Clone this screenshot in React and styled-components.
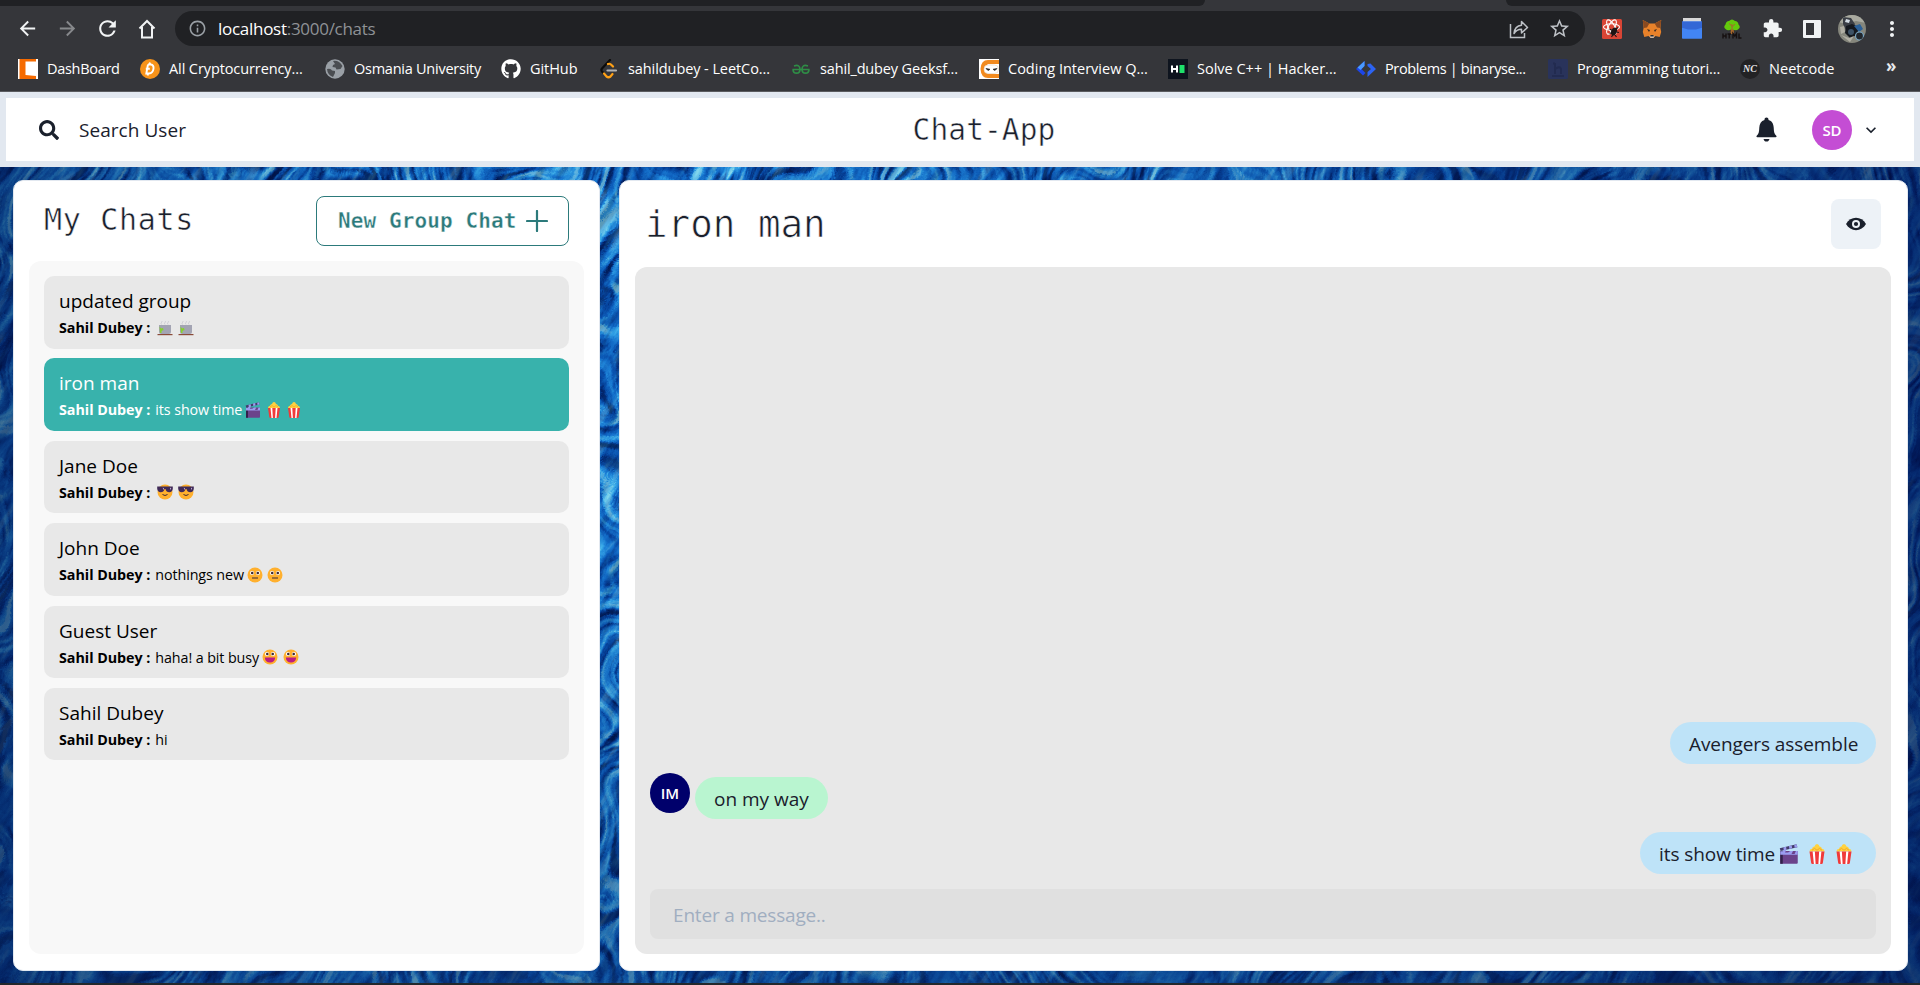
import React from "react";
import styled, { createGlobalStyle } from "styled-components";
import { FaSearch, FaGithub } from "react-icons/fa";
import {
  MdArrowBack, MdArrowForward, MdRefresh, MdInfoOutline,
  MdStarBorder, MdMoreVert, MdExpandMore, MdExtension,
} from "react-icons/md";

const GlobalStyle = createGlobalStyle`
  *, *::before, *::after { box-sizing: border-box; }
  body {
    margin: 0;
    background: #202124;
    font-family: "Open Sans", "Noto Sans", sans-serif;
    color: #1a202c;
    overflow: hidden;
  }
  svg { display: block; flex: none; }
`;

const Page = styled.div`
  width: 1920px;
  height: 985px;
  display: flex;
  flex-direction: column;
  overflow: hidden;
`;

/* ---------- browser ---------- */

const TabStrip = styled.div`
  height: 6px;
  display: flex;
  justify-content: space-between;
  background: #35363a;
`;

const TabEdge = styled.div`
  width: ${(p) => p.$width}px;
  background: #202124;
  border-radius: ${(p) => (p.$side === "left" ? "0 0 9px 0" : "0 0 0 9px")};
`;

const Toolbar = styled.div`
  height: 45px;
  padding: 0 8px 0 7px;
  display: flex;
  align-items: flex-start;
  background: #35363a;
`;

const ToolGroup = styled.div`
  display: flex;
  flex: none;
  padding-top: 5px;
`;

const ToolCell = styled.div`
  width: 40px;
  height: 35px;
  flex: none;
  display: flex;
  align-items: center;
  justify-content: center;
  color: ${(p) => p.$color || "#f1f3f4"};
`;

const AddressBar = styled.div`
  width: 1410px;
  height: 35px;
  flex: none;
  margin: 5px 7px 0 8px;
  padding: 0 14px 0 13px;
  display: flex;
  align-items: center;
  border-radius: 18px;
  background: #202124;
  color: #9aa0a6;
`;

const Url = styled.div`
  flex: 1;
  margin-left: 11px;
  font-size: 17px;
  letter-spacing: -0.28px;
  line-height: 34px;
  color: #8f9296;
  span { color: #fff; }
`;

const AddressAction = styled.div`
  margin-left: 19px;
  color: #bdc1c6;
`;

const Bookmarks = styled.div`
  height: 41px;
  padding: 0 0 5px 18px;
  display: flex;
  align-items: center;
  background: #35363a;
  border-bottom: 1px solid #5b5c60;
`;

const Bookmark = styled.div`
  width: ${(p) => p.$width}px;
  display: flex;
  align-items: center;
  gap: 9px;
  flex: none;
`;

const BookmarkLabel = styled.span`
  font-size: 14.5px;
  line-height: 20px;
  letter-spacing: ${(p) => p.$spacing}px;
  color: #fff;
  white-space: nowrap;
`;

/* ---------- app bar ---------- */

const NavBar = styled.header`
  height: 75px;
  border: 6px solid #e2e8f0;
  background: #fff;
  display: grid;
  grid-template-columns: 1fr auto 1fr;
  align-items: center;
  padding: 0 33px 0 33px;
`;

const SearchButton = styled.div`
  display: flex;
  align-items: center;
  gap: 20px;
  font-size: 19px;
  font-weight: 500;
  letter-spacing: 0.05px;
`;

const Brand = styled.h1`
  margin: 0 0 0 48px;
  font: 400 29.5px/40px "DejaVu Sans Mono", monospace;
  letter-spacing: 0.1px;
  -webkit-text-stroke: 0.5px #fff;
`;

const NavRight = styled.div`
  display: flex;
  justify-content: flex-end;
  align-items: center;
`;

const Avatar = styled.div`
  width: 40px;
  height: 40px;
  flex: none;
  display: flex;
  align-items: center;
  justify-content: center;
  border-radius: 50%;
  background: ${(p) => p.$color};
  color: #fff;
  font-size: 15px;
  font-weight: 600;
`;

const NavAvatar = styled(Avatar)`
  margin: 0 9px 0 35px;
`;

/* ---------- content ---------- */

const Content = styled.main`
  height: 816px;
  display: grid;
  grid-template: 816px / 1920px;
  & > * { grid-area: 1 / 1; }
`;

const Columns = styled.div`
  z-index: 1;
  display: flex;
  gap: 19px;
  padding: 13px 12px 12px 13px;
`;

const Panel = styled.section`
  width: ${(p) => p.$width}px;
  flex: none;
  display: flex;
  flex-direction: column;
  background: #fff;
  border: 1px solid #e2e8f0;
  border-radius: 10px;
`;

const ChatsHeader = styled.div`
  height: 80px;
  padding: 15px 30px 15px 30px;
  display: flex;
  justify-content: space-between;
`;

const PanelTitle = styled.h2`
  margin: 0;
  font-family: "DejaVu Sans Mono", monospace;
  font-weight: 400;
  font-size: ${(p) => p.$size}px;
  line-height: ${(p) => p.$line}px;
  letter-spacing: ${(p) => p.$spacing || 0}px;
  -webkit-text-stroke: ${(p) => p.$thin}px #fff;
`;

const GroupButton = styled.button`
  width: 253px;
  height: 50px;
  padding: 0 20px 0 21px;
  display: flex;
  align-items: center;
  justify-content: space-between;
  border: 1px solid #2c7a7b;
  border-radius: 8px;
  background: #fff;
  color: #2c7a7b;
  font: 700 21px/48px "DejaVu Sans Mono", monospace;
  letter-spacing: 0.1px;
  -webkit-text-stroke: 0.35px #fff;
`;

const ChatList = styled.div`
  margin: 0 15px 0 15px;
  height: 693px;
  padding: 15px;
  display: flex;
  flex-direction: column;
  gap: 9.9px;
  background: #f8f8f8;
  border-radius: 12px;
`;

const ChatRow = styled.div`
  height: 72.5px;
  flex: none;
  padding: 10px 15px;
  border-radius: 10px;
  background: ${(p) => (p.$active ? "#38b2ac" : "#e8e8e8")};
  color: ${(p) => (p.$active ? "#fff" : "#000")};
`;

const ChatName = styled.div`
  font-size: 19px;
  line-height: 31px;
`;

const Preview = styled.div`
  height: 21px;
  display: flex;
  align-items: center;
  font-size: 14.3px;
  line-height: 21px;
  letter-spacing: -0.1px;
  white-space: pre;
  b { font-weight: 700; letter-spacing: -0.03px; margin-right: 5px; }
`;

const EmojiRun = styled.span`
  display: flex;
  gap: ${(p) => p.$gap}px;
  margin-left: ${(p) => p.$left}px;
`;

const ConversationHeader = styled.div`
  height: 86px;
  padding: 18px 26px 0 25px;
  display: flex;
  justify-content: space-between;
`;

const ViewButton = styled.div`
  width: 50px;
  height: 50px;
  display: flex;
  align-items: center;
  justify-content: center;
  border-radius: 8px;
  background: #edf2f7;
`;

const Conversation = styled.div`
  margin: 0 16px 0 15px;
  height: 687px;
  padding: 15px;
  display: flex;
  flex-direction: column;
  justify-content: flex-end;
  background: #e8e8e8;
  border-radius: 12px;
`;

const MessageRow = styled.div`
  display: flex;
  gap: 5px;
  align-items: flex-start;
  justify-content: ${(p) => (p.$mine ? "flex-end" : "flex-start")};
  margin-bottom: ${(p) => p.$after}px;
`;

const Bubble = styled.div`
  height: 42px;
  width: ${(p) => p.$width}px;
  margin-top: ${(p) => p.$top || 0}px;
  padding: 2px 0 0 19px;
  display: flex;
  align-items: center;
  border-radius: 25px;
  background: ${(p) => (p.$mine ? "#bee3f8" : "#b9f5d0")};
  font-size: 19px;
  letter-spacing: ${(p) => (p.$mine ? -0.08 : 0)}px;
  white-space: nowrap;
`;

const MessageInput = styled.div`
  height: 50px;
  padding: 1px 0 0 23px;
  display: flex;
  align-items: center;
  border-radius: 8px;
  background: #e0e0e0;
  color: #a0aec0;
  font-size: 19px;
  letter-spacing: -0.18px;
`;

const Taskbar = styled.div`
  height: 2px;
  background: #23282c;
`;

/* ---------- drawings ---------- */

const Ramp = () => (
  <feComponentTransfer>
    <feFuncR type="table" tableValues="0 0.01 0.02 0.06 0.12 0.24 0.55" />
    <feFuncG type="table" tableValues="0.06 0.13 0.25 0.39 0.52 0.7 0.88" />
    <feFuncB type="table" tableValues="0.24 0.4 0.6 0.76 0.86 0.94 0.95" />
  </feComponentTransfer>
);

const Backdrop = () => (
  <svg width="1920" height="816" viewBox="0 0 1920 816">
    <defs>
      <filter id="strokesA" x="0" y="0" width="100%" height="100%" colorInterpolationFilters="sRGB">
        <feTurbulence type="fractalNoise" baseFrequency="0.1 0.016" numOctaves="5" seed="8" result="n" />
        <feTurbulence type="fractalNoise" baseFrequency="0.009" numOctaves="2" seed="3" result="w" />
        <feDisplacementMap in="n" in2="w" scale="190" xChannelSelector="R" yChannelSelector="G" />
        <feColorMatrix values="2 1 0 0 -0.98  2 1 0 0 -0.98  2 1 0 0 -0.98  0 0 0 0 1" />
        <Ramp />
      </filter>
      <filter id="strokesB" x="0" y="0" width="100%" height="100%" colorInterpolationFilters="sRGB">
        <feTurbulence type="fractalNoise" baseFrequency="0.02 0.11" numOctaves="5" seed="21" />
        <feColorMatrix values="2 1 0 0 -0.98  2 1 0 0 -0.98  2 1 0 0 -0.98  0 0 0 0 1" />
        <Ramp />
      </filter>
      <linearGradient id="shade" x1="0" x2="1" y1="0" y2="0">
        <stop offset="0" stopColor="#021447" stopOpacity="0.55" />
        <stop offset="0.12" stopColor="#03225f" stopOpacity="0.2" />
        <stop offset="0.35" stopColor="#0a4ea0" stopOpacity="0.05" />
        <stop offset="0.7" stopColor="#052a70" stopOpacity="0.3" />
        <stop offset="1" stopColor="#010f48" stopOpacity="0.65" />
      </linearGradient>
      <linearGradient id="floor" x1="0" x2="0" y1="0" y2="1">
        <stop offset="0.5" stopColor="#03205c" stopOpacity="0" />
        <stop offset="1" stopColor="#03205c" stopOpacity="0.4" />
      </linearGradient>
    </defs>
    <g transform="rotate(14 960 408)">
      <rect x="-200" y="-300" width="2320" height="1420" filter="url(#strokesA)" />
    </g>
    <g transform="rotate(-58 960 408)" opacity="0.3">
      <rect x="0" y="-700" width="1920" height="2220" filter="url(#strokesB)" />
    </g>
    <rect width="1920" height="816" fill="url(#shade)" />
    <rect width="1920" height="816" fill="url(#floor)" />
  </svg>
);

const Home = () => (
  <svg width="18" height="20" viewBox="0 0 18 20" fill="none" stroke="#f1f3f4" strokeWidth="2">
    <path d="M1.500 9.500L9 2l7.500 7.500M4 8v10.500h10V8" />
  </svg>
);

const Bell = () => (
  <svg width="21" height="25" viewBox="0 0 21 25" fill="#1a202c">
    <path d="M10.500 .5c1.200 0 2 .9 2 2v.4c3.500 1 5 3.900 5.200 7.500.2 4 .4 6.300 2.600 8.300.5.500.3 1.500-.6 1.500H1.300c-.9 0-1.100-1-.6-1.500 2.200-2 2.400-4.300 2.600-8.300.2-3.600 1.700-6.500 5.200-7.500v-.4c0-1.100.8-2 2-2z" />
    <path d="M7.500 22h6c-.4 1.600-1.500 2.600-3 2.600s-2.600-1-3-2.600z" />
  </svg>
);

const Eye = () => (
  <svg width="20" height="14" viewBox="0 0 20 14">
    <path d="M0 7C2.400 3 6 .8 10 .8S17.600 3 20 7c-2.400 4-6 6.200-10 6.200S2.400 11 0 7z" fill="#1a202c" />
    <circle cx="10" cy="7" r="4" fill="#edf2f7" />
    <circle cx="10" cy="7" r="2.100" fill="#1a202c" />
  </svg>
);

const Plus = () => (
  <svg width="22" height="22" viewBox="0 0 22 22" stroke="#2c7a7b" strokeWidth="2.200" strokeLinecap="round">
    <path d="M11 1v20M1 11h20" />
  </svg>
);

const Cup = ({ size = 16 }) => (
  <svg width={size} height={size} viewBox="0 0 16 16">
    <path d="M4.500 4.500q-1-1 0-2t0-1.500M8 4.500q-1-1 0-2t0-1.500M11 4.500q-1-1 0-2t0-1.500" stroke="#c4c4cc" fill="none" strokeWidth=".8" />
    <path d="M2 5h12v7q0 2-2 2H4q-2 0-2-2z" fill="#a3a4b3" />
    <path d="M2.500 6.500l1.500 2 2-.5.500 2-2 1v2H3z" fill="#86d12f" />
    <path d="M.5 14.600h15" stroke="#8a4b38" strokeWidth="1.200" />
  </svg>
);

const Clapper = ({ size = 16 }) => (
  <svg width={size} height={size} viewBox="0 0 16 16">
    <path d="M1 5.500h14V15q0 .8-.8.8H1z" fill="#6b438b" />
    <path d="M1 5.500h2V15.800H1z" fill="#32204a" />
    <path d="M.6 3.400L14 .2l.7 2.300L1.300 5.600z" fill="#433b6b" />
    <path d="M3.500 2.700l2.200-.5.300 2.300-2.200.5zM8 1.600l2.200-.5.300 2.300-2.200.5zM12.200.7l1.800-.5.700 2.300-2.200.5zM1 5.800h2l1-1.600 2 .1-1.200 2.400 2.500.1L9 5.500l2.200.1L10 8h2.500l1-2.500H15v3H1z" fill="#9b9cf0" />
  </svg>
);

const Popcorn = ({ size = 16 }) => (
  <svg width={size} height={size} viewBox="0 0 16 16">
    <path d="M2 6q0-2 2-2.200Q4.500 2 6 2q.5-2 2-2t2 2q1.500 0 2 1.800Q14 4 14 6z" fill="#ffd23f" />
    <path d="M2 6h12l-1.300 9q-.1 1-1.100 1H4.400q-1 0-1.100-1z" fill="#f03a3a" />
    <path d="M4.500 6h1.800l.6 10H5.500zM9.700 6h1.800l-1 10H9.100z" fill="#fff" />
    <path d="M4 5l2-1.500L8 5l2-1.500L12 5" stroke="#f2a82a" strokeWidth=".8" fill="none" />
  </svg>
);

const Face = ({ kind }) => (
  <svg width="16" height="16" viewBox="0 0 16 16">
    <circle cx="8" cy="8" r="7.500" fill="#ffb02e" />
    {kind === "cool" && (
      <>
        <path d="M.2 2.500h15.600v2.300Q15.500 8.200 12.300 8.200 9.300 8.200 8.500 5h-1Q6.700 8.200 3.700 8.200.5 8.200.2 4.800z" fill="#402a57" />
        <path d="M5.800 3.500l1.200 1-.8 1.500zM13 3.500l1.200 1-.8 1.500z" fill="#d9c8ef" />
        <path d="M5.500 10.500q2.500 2 5 0" stroke="#402a32" fill="none" />
      </>
    )}
    {kind === "neutral" && (
      <>
        <circle cx="5" cy="6" r="2" fill="#fff" />
        <circle cx="11" cy="6" r="2" fill="#fff" />
        <circle cx="5.200" cy="6" r="1.300" fill="#402a32" />
        <circle cx="10.800" cy="6" r="1.300" fill="#402a32" />
        <path d="M5 11h6" stroke="#402a32" />
      </>
    )}
    {kind === "grin" && (
      <>
        <circle cx="5" cy="5" r="2.100" fill="#fff" />
        <circle cx="11" cy="5" r="2.100" fill="#fff" />
        <circle cx="5.300" cy="5" r="1.300" fill="#402a32" />
        <circle cx="10.700" cy="5" r="1.300" fill="#402a32" />
        <path d="M2.800 8.500h10.400q-.5 5-5.200 5t-5.200-5z" fill="#bb1d80" />
      </>
    )}
  </svg>
);

const emojis = {
  cup: <Cup />, clapper: <Clapper />, popcorn: <Popcorn />,
  cool: <Face kind="cool" />, neutral: <Face kind="neutral" />, grin: <Face kind="grin" />,
};

const Share = () => (
  <svg width="20" height="20" viewBox="0 0 20 20" fill="none" stroke="#bdc1c6" strokeWidth="1.500">
    <path d="M1.500 5v13.500h14V14" />
    <path d="M5 14.500C5.500 9 8.500 6.500 12.500 6.200V2.500l6 6-6 5.500v-3.700C9 10.300 6.800 11.500 5 14.500z" strokeLinejoin="round" />
  </svg>
);

const Bug = () => (
  <svg width="20" height="20" viewBox="0 0 20 20">
    <rect width="20" height="20" rx="1.500" fill="#d94535" />
    <g fill="none" stroke="#fff" strokeWidth="1.100">
      <ellipse cx="9.500" cy="8" rx="8" ry="3.200" />
      <ellipse cx="9.500" cy="8" rx="8" ry="3.200" transform="rotate(60 9.500 8)" />
      <ellipse cx="9.500" cy="8" rx="8" ry="3.200" transform="rotate(120 9.500 8)" />
    </g>
    <ellipse cx="12" cy="12.500" rx="2.800" ry="4" transform="rotate(25 12 12.500)" fill="#1e1414" />
    <path d="M7.500 10l3 1.500M7.500 14.500l3-1M9.500 18l1.500-2.500M14 10l2-1.500M14.500 13l2.500.5M13 16l1.500 2" stroke="#1e1414" strokeWidth="1.200" />
  </svg>
);

const Fox = () => (
  <svg width="20" height="20" viewBox="0 0 20 20">
    <path d="M.8 1l6.500 3.600h5.400L19.200 1l-.8 8 .8 4-1.500 5-4.200-1-2 1.800h-3L6.500 17l-4.200 1-1.500-5 .8-4z" fill="#e8822a" />
    <path d="M.8 1l6.500 3.600L5 8.500 1.600 9zM19.200 1l-6.500 3.600L15 8.500l3.400.5z" fill="#8a4a20" />
    <path d="M5 10l3 1-1 2zM15 10l-3 1 1 2z" fill="#3b2a22" />
    <path d="M7.500 16.500h5l-.8 2.300H8.300z" fill="#d9cfc6" />
    <path d="M8.500 16h3l.3 1.500H8.200z" fill="#2a2a2a" />
  </svg>
);

const Window = () => (
  <svg width="20" height="21" viewBox="0 0 20 21">
    <rect x="1" width="18" height="5" fill="#d8d8d8" />
    <path d="M0 3.500h20V20q0 .8-.8.8H.8Q0 20.800 0 20z" fill="#4285f4" />
    <path d="M0 3.500h20v6.300l-6 1.700H6L0 9.800z" fill="#3367d6" />
  </svg>
);

const Tree = () => (
  <svg width="20" height="20" viewBox="0 0 20 20">
    <path d="M9 8h2.500l.5 7H8.500z" fill="#a8682a" />
    <path d="M3.500 10Q1 8 3.500 5.500 4 2 7 2 10-1 13 2 16 2 16.500 5.500 19 8 16.500 10 14 12.500 10 10 6 12.500 3.500 10z" fill="#63c90c" />
    <path d="M10 13V5M10 8l3-3M10 7L7 4.500" stroke="#a8682a" />
    <path d="M1 14.500v5M4 14.500v5M1 17h3M5.500 15h3.500M7.200 14.500v5M11 19.500v-5l1.800 2.500 1.700-2.500v5M17 14.500V19h2.500" fill="none" stroke="#161010" strokeWidth="1.400" />
  </svg>
);

const SidePanel = () => (
  <svg width="18" height="18" viewBox="0 0 18 18">
    <rect width="18" height="18" rx="1" fill="#f1f3f4" />
    <rect x="3" y="3" width="8" height="12" fill="#35363a" />
  </svg>
);

const Photo = () => (
  <svg width="28" height="28" viewBox="0 0 28 28">
    <clipPath id="disc"><circle cx="14" cy="14" r="14" /></clipPath>
    <g clipPath="url(#disc)">
      <rect width="28" height="28" fill="#85867c" />
      <path d="M0 0h28v8L18 6 8 9 0 7z" fill="#a9aaa0" />
      <path d="M5 2l8 1 4 6-2 5-7 1-3-6z" fill="#3a3e45" />
      <path d="M8 11l6-2 7 3-2 8-7 3-5-5z" fill="#15191f" />
      <path d="M16 11l6-2 3 5-4 3z" fill="#2b6098" />
      <circle cx="13" cy="17" r="3" fill="#3d5266" />
      <circle cx="21.500" cy="21" r="4" fill="#22272d" stroke="#78a6c4" strokeWidth="1.200" />
      <path d="M8 4l4 1-1 3-4-1z" fill="#d3dce4" />
      <path d="M2 12l4-1 1 6-4 2zM3 20l8 3 5-2-4 6z" fill="#b1afa4" />
    </g>
  </svg>
);

const CodingTile = () => (
  <svg width="20" height="20" viewBox="0 0 20 20">
    <rect width="20" height="20" fill="#fff" />
    <path d="M1.500 0H18v2.500H7.500v13.500L18 17v3H1.500z" fill="#f56a00" />
  </svg>
);
const Coin = () => (
  <svg width="20" height="20" viewBox="0 0 20 20">
    <circle cx="10" cy="10" r="10" fill="#f7931a" />
    <path d="M8 5.500h2.800q3.200.5 2.700 4.200-.6 4.600-4.500 4.800H6.300L8 5.500M5.800 9.800h4M10 3.500l-.4 2M8 14.500l-.4 2" fill="none" stroke="#fff" strokeWidth="1.900" />
  </svg>
);
const Globe = () => (
  <svg width="20" height="20" viewBox="0 0 20 20">
    <circle cx="10" cy="10" r="9.700" fill="#9aa0a6" />
    <path d="M2 10q4-1 5 1.500l3 .5v2l-2 4Q2.500 16 2 10zM8 2q6-1 9.500 5l-2 3-4 .5-1-2-3-.5L8 6l2-1z" fill="#4b4e52" />
  </svg>
);
const Leet = () => (
  <svg width="20" height="20" viewBox="0 0 20 20" fill="none" strokeWidth="2.200" strokeLinecap="round">
    <path d="M11 1L3 9.500q-1.200 1.500 0 3l2 2" stroke="#0c0c0c" />
    <path d="M5 14.500l2.500 3q2 1.500 4 0L13.500 15M9 5q2-.8 3.500 1L14 7.500" stroke="#ffa116" />
    <path d="M8.500 11.500H17" stroke="#b3b3b3" />
  </svg>
);
const Geeks = () => (
  <svg width="20" height="20" viewBox="0 0 20 20" fill="none" stroke="#2f8d46" strokeWidth="1.700">
    <path d="M1.500 10.500h17M3 7Q9 5 9 10.500 8.800 14.200 5.500 14.200T2 10.500M17 7Q11 5 11 10.500 11.200 14.200 14.500 14.200T18 10.500" />
  </svg>
);
const Ninja = () => (
  <svg width="20" height="20" viewBox="0 0 20 20">
    <rect width="20" height="20" fill="#fff" />
    <path d="M20 1H9Q2 1 1.500 10 2 19 9 19h11v-4H9l-3-3V8l3-3h11z" fill="#f28a1e" />
    <rect x="5" y="6" width="14.500" height="8.500" rx="4" fill="#fff" stroke="#e6d2bb" strokeWidth=".6" />
    <path d="M7 9.500l4 .8-2 1.200zM18 9.500l-4 .8 2 1.200z" fill="#222" stroke="#222" strokeWidth=".7" />
  </svg>
);
const Rank = () => (
  <svg width="20" height="20" viewBox="0 0 20 20">
    <rect width="20" height="20" fill="#0e141e" />
    <path d="M4 6.500v7M9 6.500v7M4 10h5" stroke="#fff" strokeWidth="2" />
    <rect x="11.500" y="6" width="5" height="8" fill="#1ee06a" />
  </svg>
);
const Binary = () => (
  <svg width="20" height="20" viewBox="0 0 20 20">
    <path d="M8.500 2v5L5.500 10 9.500 14 7 16.500 0 10z" fill="#1c45e8" />
    <path d="M8.500 2v5L4.500 11 1.500 8.500z" fill="#4a9aff" />
    <path d="M11.500 5l3-.5L20 10l-8.500 8v-5l3.500-3-3.500-3z" fill="#2c63f2" />
  </svg>
);
const Course = () => (
  <svg width="20" height="20" viewBox="0 0 20 20">
    <rect width="20" height="20" rx="1.500" fill="#29335b" />
    <path d="M7 4v11M7 10q5-3.500 6 0v5M4 17h12M5 4.500h2" fill="none" stroke="#222b50" strokeWidth="2" />
  </svg>
);
const NeetBadge = styled.span`
  width: 20px;
  height: 20px;
  display: flex;
  align-items: center;
  justify-content: center;
  border-radius: 50%;
  background: #222224;
  color: #e8e8e8;
  font: italic 700 10px/20px "Liberation Serif", serif;
`;
const Overflow = styled.span`
  margin: -5px 0 0 6px;
  font-size: 17px;
  line-height: 20px;
  font-weight: 700;
  color: #e8eaed;
`;

/* ---------- data ---------- */

const bookmarks = [
  { icon: <CodingTile />, label: "DashBoard", width: 122, spacing: -0.3 },
  { icon: <Coin />, label: "All Cryptocurrency...", width: 185, spacing: -0.1 },
  { icon: <Globe />, label: "Osmania University", width: 176, spacing: -0.25 },
  { icon: <FaGithub size={20} color="#fff" />, label: "GitHub", width: 98, spacing: -0.05 },
  { icon: <Leet />, label: "sahildubey - LeetCo...", width: 192, spacing: -0.08 },
  { icon: <Geeks />, label: "sahil_dubey Geeksf...", width: 188, spacing: -0.15 },
  { icon: <Ninja />, label: "Coding Interview Q...", width: 189, spacing: 0 },
  { icon: <Rank />, label: "Solve C++ | Hacker...", width: 188, spacing: 0 },
  { icon: <Binary />, label: "Problems | binaryse...", width: 192, spacing: -0.38 },
  { icon: <Course />, label: "Programming tutori...", width: 192, spacing: -0.1 },
  { icon: <NeetBadge>NC</NeetBadge>, label: "Neetcode", width: 140, spacing: 0.05 },
];

const chats = [
  { name: "updated group", text: "", icons: ["cup", "cup"], left: 2 },
  { name: "iron man", text: "its show time", icons: ["clapper", "popcorn", "popcorn"], left: 3, active: true },
  { name: "Jane Doe", text: "", icons: ["cool", "cool"], left: 2 },
  { name: "John Doe", text: "nothings new", icons: ["neutral", "neutral"], left: 3 },
  { name: "Guest User", text: "haha! a bit busy", icons: ["grin", "grin"], left: 3 },
  { name: "Sahil Dubey", text: "hi", icons: [], left: 0 },
];

export default function App() {
  return (
    <Page>
      <GlobalStyle />
      <TabStrip>
        <TabEdge $side="left" $width={1205} />
        <TabEdge $side="right" $width={414} />
      </TabStrip>
      <Toolbar>
        <ToolGroup>
          <ToolCell><MdArrowBack size={23} /></ToolCell>
          <ToolCell $color="#87898c"><MdArrowForward size={23} /></ToolCell>
          <ToolCell><MdRefresh size={25} /></ToolCell>
          <ToolCell><Home /></ToolCell>
        </ToolGroup>
        <AddressBar>
          <MdInfoOutline size={19} />
          <Url><span>localhost</span>:3000/chats</Url>
          <AddressAction><Share /></AddressAction>
          <AddressAction><MdStarBorder size={23} /></AddressAction>
        </AddressBar>
        <ToolGroup>
          <ToolCell><Bug /></ToolCell>
          <ToolCell><Fox /></ToolCell>
          <ToolCell><Window /></ToolCell>
          <ToolCell><Tree /></ToolCell>
          <ToolCell><MdExtension size={21} /></ToolCell>
          <ToolCell><SidePanel /></ToolCell>
          <ToolCell><Photo /></ToolCell>
          <ToolCell><MdMoreVert size={24} /></ToolCell>
        </ToolGroup>
      </Toolbar>
      <Bookmarks>
        {bookmarks.map((b) => (
          <Bookmark key={b.label} $width={b.width}>
            {b.icon}
            <BookmarkLabel $spacing={b.spacing}>{b.label}</BookmarkLabel>
          </Bookmark>
        ))}
        <Overflow>»</Overflow>
      </Bookmarks>

      <NavBar>
        <SearchButton>
          <FaSearch size={20} />
          Search User
        </SearchButton>
        <Brand>Chat-App</Brand>
        <NavRight>
          <Bell />
          <NavAvatar $color="#c44dd4">SD</NavAvatar>
          <MdExpandMore size={20} />
        </NavRight>
      </NavBar>

      <Content>
        <Backdrop />
        <Columns>
          <Panel $width={587}>
            <ChatsHeader>
              <PanelTitle $size={30} $line={47} $spacing={0.7} $thin={0.5}>My Chats</PanelTitle>
              <GroupButton>New Group Chat<Plus /></GroupButton>
            </ChatsHeader>
            <ChatList>
              {chats.map((c) => (
                <ChatRow key={c.name} $active={c.active}>
                  <ChatName>{c.name}</ChatName>
                  <Preview>
                    <b>Sahil Dubey :</b>
                    {c.text}
                    <EmojiRun $gap={4.500} $left={c.left}>
                      {c.icons.map((k, i) => <React.Fragment key={i}>{emojis[k]}</React.Fragment>)}
                    </EmojiRun>
                  </Preview>
                </ChatRow>
              ))}
            </ChatList>
          </Panel>

          <Panel $width={1289}>
            <ConversationHeader>
              <PanelTitle $size={37.500} $line={50} $thin={0.7}>iron man</PanelTitle>
              <ViewButton><Eye /></ViewButton>
            </ConversationHeader>
            <Conversation>
              <MessageRow $mine $after={9}>
                <Bubble $mine $width={206}>Avengers assemble</Bubble>
              </MessageRow>
              <MessageRow $after={13}>
                <Avatar $color="#00006b">IM</Avatar>
                <Bubble $width={133} $top={4}>on my way</Bubble>
              </MessageRow>
              <MessageRow $mine $after={15}>
                <Bubble $mine $width={236}>
                  its show time
                  <EmojiRun $gap={7.500} $left={4}>
                    <Clapper size={20} />
                    <Popcorn size={20} />
                    <Popcorn size={20} />
                  </EmojiRun>
                </Bubble>
              </MessageRow>
              <MessageInput>Enter a message..</MessageInput>
            </Conversation>
          </Panel>
        </Columns>
      </Content>
      <Taskbar />
    </Page>
  );
}
